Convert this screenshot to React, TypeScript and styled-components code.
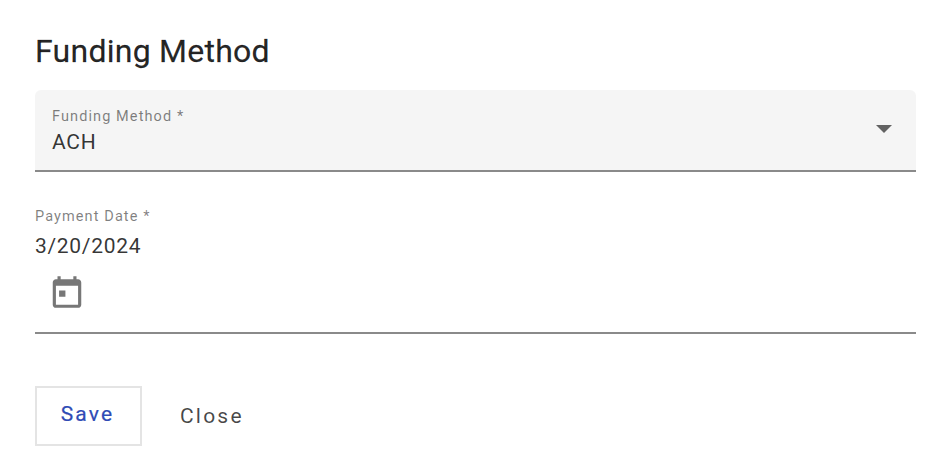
import React from "react";
import styled, { createGlobalStyle } from "styled-components";

const GlobalStyle = createGlobalStyle`
  html, body {
    margin: 0;
    background: #fff;
    font-family: Roboto, "Liberation Sans", sans-serif;
  }
`;

const Page = styled.div`
  width: 950px;
  height: 463px;
  box-sizing: border-box;
  padding: 31px 34px 0 35px;
  overflow: hidden;
`;

const Title = styled.h2`
  margin: 0 0 19px;
  font-size: 32px;
  line-height: 40px;
  font-weight: 400;
  letter-spacing: 0.25px;
  color: rgba(0, 0, 0, 0.87);
  -webkit-text-stroke: 0.3px rgba(0, 0, 0, 0.6);
`;

const SelectField = styled.div`
  height: 82px;
  box-sizing: border-box;
  padding: 18px 24px 0 17px;
  display: flex;
  align-items: flex-start;
  justify-content: space-between;
  background: #f5f5f5;
  border-radius: 6px 6px 0 0;
  border-bottom: 2px solid #8a8a8a;
`;

const FieldLabel = styled.div`
  font-size: 14.5px;
  line-height: 18px;
  letter-spacing: 1.1px;
  color: rgba(0, 0, 0, 0.5);
`;

const FieldValue = styled.div<{ $gap: number }>`
  margin-top: ${(p) => p.$gap}px;
  font-size: 21px;
  line-height: 31px;
  letter-spacing: 0.7px;
  color: rgba(0, 0, 0, 0.8);
`;

const Arrow = styled.div`
  margin-top: 17px;
  width: 0;
  height: 0;
  border-left: 8px solid transparent;
  border-right: 8px solid transparent;
  border-top: 8px solid rgba(0, 0, 0, 0.6);
`;

const DateField = styled.div`
  margin-top: 36px;
  height: 126px;
  box-sizing: border-box;
  border-bottom: 2px solid #8a8a8a;
`;

const CalendarButton = styled.div`
  margin: 11px 0 0 13px;
  display: flex;
  color: #777;
`;

const Actions = styled.div`
  margin-top: 52px;
  display: flex;
  align-items: center;
  gap: 38px;
`;

const SaveButton = styled.button`
  width: 107px;
  height: 60px;
  padding: 0 2px 4px 0;
  background: #fff;
  border: 2px solid #e4e4e4;
  font: 400 21px Roboto, sans-serif;
  letter-spacing: 2.2px;
  color: #2f4bb5;
  -webkit-text-stroke: 0.2px #2f4bb5;
`;

const CloseButton = styled.button`
  padding: 0;
  background: none;
  border: 0;
  font: 400 21px Roboto, sans-serif;
  letter-spacing: 2.2px;
  color: rgba(0, 0, 0, 0.72);
`;

function CalendarIcon() {
  return (
    <svg width="38" height="38" viewBox="0 0 24 24" fill="currentColor">
      <path d="M19 4h-1V2h-2v2H8V2H6v2H5c-1.1 0-2 .9-2 2v14c0 1.1.9 2 2 2h14c1.1 0 2-.9 2-2V6c0-1.1-.9-2-2-2zm0 16H5V8h14v12zM7 11h4v4H7z" />
    </svg>
  );
}

export default function App() {
  return (
    <Page>
      <GlobalStyle />
      <Title>Funding Method</Title>
      <SelectField>
        <div>
          <FieldLabel>Funding Method *</FieldLabel>
          <FieldValue $gap={1}>ACH</FieldValue>
        </div>
        <Arrow />
      </SelectField>
      <DateField>
        <FieldLabel>Payment Date *</FieldLabel>
        <FieldValue $gap={5}>3/20/2024</FieldValue>
        <CalendarButton>
          <CalendarIcon />
        </CalendarButton>
      </DateField>
      <Actions>
        <SaveButton>Save</SaveButton>
        <CloseButton>Close</CloseButton>
      </Actions>
    </Page>
  );
}
